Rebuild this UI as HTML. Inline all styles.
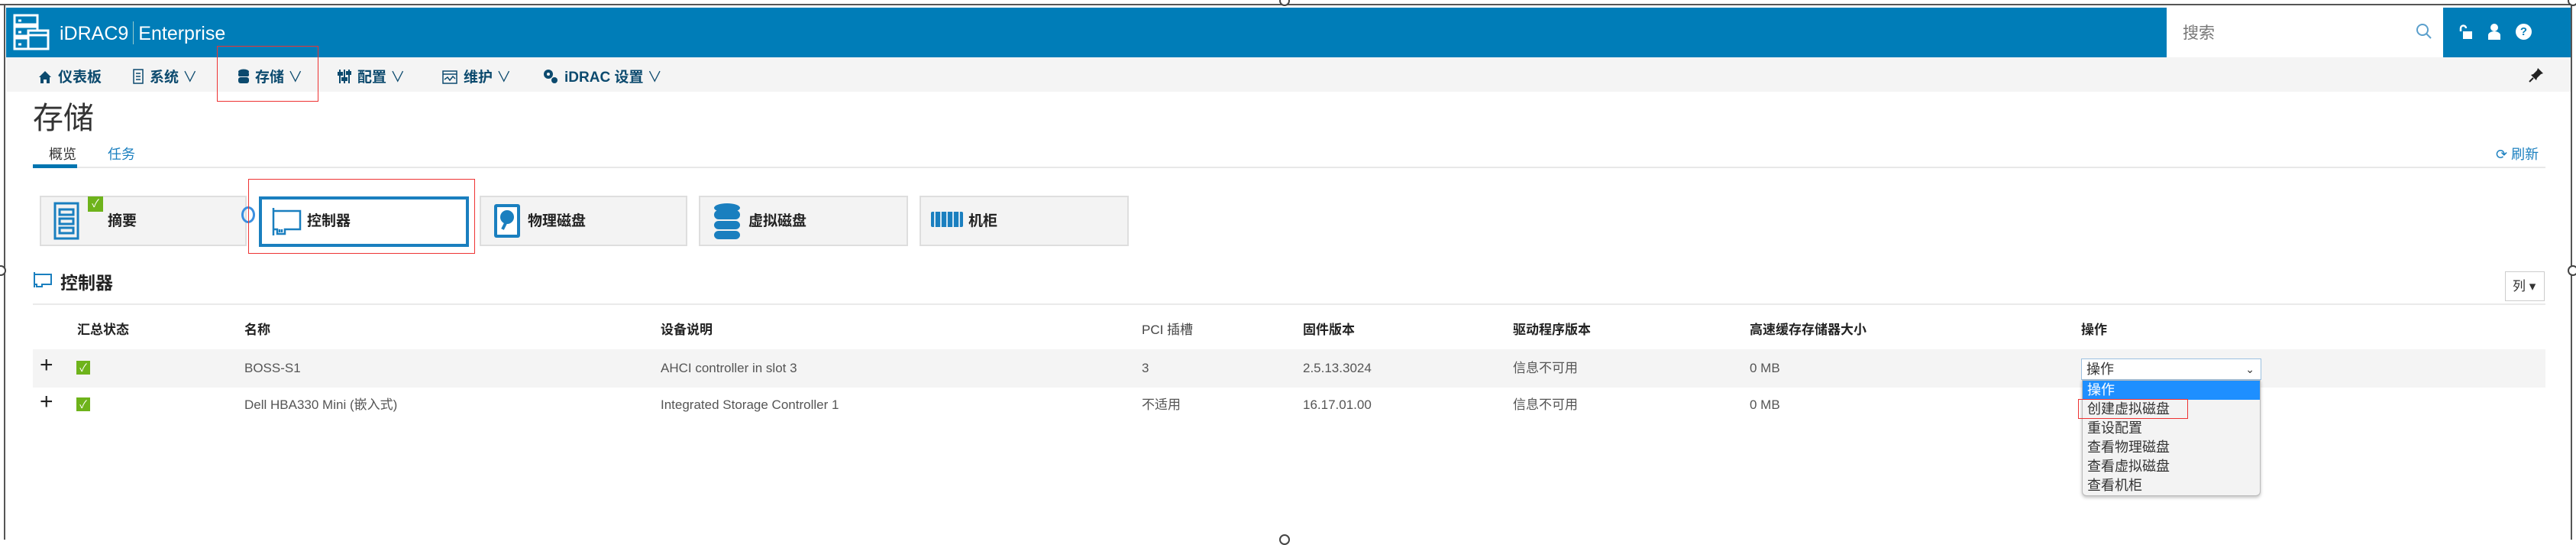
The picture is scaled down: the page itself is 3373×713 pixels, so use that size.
<!DOCTYPE html>
<html><head><meta charset="utf-8">
<style>
*{box-sizing:border-box;margin:0;padding:0}
body{width:3373px;height:706px;background:#fff;position:relative;overflow:hidden;font-family:"Liberation Sans","Noto Sans CJK SC",sans-serif;color:#333}
.a{position:absolute;white-space:nowrap}
.hdr{left:8px;top:10px;width:3358px;height:65px;background:#007db8}
.nav{left:8px;top:75px;width:3358px;height:45px;background:#f4f4f4}
.ni{font-size:19px;font-weight:bold;color:#0c4a6e;top:86px}
.ni svg{vertical-align:-3px;margin-right:8px}
.tile{top:256px;height:66px;background:#f3f3f3;border:2px solid #dedede;font-size:19px;font-weight:bold;color:#222}
.th{top:421px;font-size:17px;font-weight:bold;color:#222;line-height:22px}
.td{font-size:17px;color:#555;line-height:22px}
.chk{width:18px;height:18px;background:#6eb31b;color:#fff;font-size:14px;text-align:center;line-height:18px}
.plus{font-size:30px;color:#222;font-weight:300}
.dd div{height:25px;line-height:25px;padding-left:6px;font-size:18px;color:#333}
.h{width:14px;height:14px;border:2px solid #444;border-radius:50%;background:#fff}
</style></head><body>
<div class="a" style="left:0;top:5px;width:3373px;height:2px;background:#555"></div>
<div class="a" style="left:5px;top:5px;width:2px;height:701px;background:#555"></div>
<div class="a" style="left:3366px;top:5px;width:2px;height:701px;background:#555"></div>
<div class="a h" style="left:1675px;top:-6px"></div>
<div class="a h" style="left:3362px;top:-6px"></div>
<div class="a h" style="left:-6px;top:347px"></div>
<div class="a h" style="left:3362px;top:347px"></div>
<div class="a h" style="left:1675px;top:699px"></div>
<div class="a hdr"></div>
<svg class="a" style="left:17px;top:18px" width="50" height="50" viewBox="0 0 50 50" fill="none" stroke="#fff" stroke-width="3"><rect x="2" y="2" width="30" height="12"/><rect x="2" y="17" width="30" height="12"/><rect x="2" y="32" width="30" height="14"/><rect x="20" y="22" width="26" height="24" fill="#007db8"/><line x1="20" y1="28" x2="46" y2="28"/><line x1="7" y1="9" x2="11" y2="9"/><line x1="7" y1="24" x2="11" y2="24"/><line x1="7" y1="40" x2="11" y2="40"/></svg>
<div class="a" style="left:78px;top:28px;font-size:25px;color:#fff">iDRAC9<span style="display:inline-block;width:1px;height:30px;background:#9cc;margin:0 6px;vertical-align:-6px"></span>Enterprise</div>
<div class="a" style="left:2837px;top:10px;width:362px;height:65px;background:#fff"></div>
<div class="a" style="left:2858px;top:27px;font-size:21px;color:#777">搜索</div>
<svg class="a" style="left:3162px;top:29px" width="24" height="24" viewBox="0 0 24 24" fill="none" stroke="#5a9fcc" stroke-width="2"><circle cx="10" cy="10" r="7"/><line x1="15" y1="15" x2="21" y2="21"/></svg>
<svg class="a" style="left:3219px;top:32px" width="20" height="20" viewBox="0 0 20 20"><path d="M3 9 V5 a3.5 3.5 0 0 1 7 0" fill="none" stroke="#fff" stroke-width="2.5"/><rect x="6" y="9" width="12" height="10" fill="#fff"/></svg>
<svg class="a" style="left:3257px;top:31px" width="18" height="22" viewBox="0 0 18 22" fill="#fff"><circle cx="9" cy="5" r="5"/><path d="M1 21 V15 a8 5 0 0 1 16 0 V21z"/></svg>
<div class="a" style="left:3294px;top:31px;width:21px;height:21px;border-radius:50%;background:#fff;color:#007db8;font-size:15px;font-weight:bold;text-align:center;line-height:21px">?</div>
<div class="a nav"></div>
<div class="a ni" style="left:50px"><svg width="18" height="18" viewBox="0 0 18 18" fill="#0c4a6e"><path d="M9 1 L1 9 H3 V17 H7 V12 H11 V17 H15 V9 H17z"/></svg>仪表板</div>
<div class="a ni" style="left:174px"><svg width="14" height="20" viewBox="0 0 14 20" fill="none" stroke="#0c4a6e" stroke-width="1.5"><rect x="1" y="1" width="12" height="18"/><line x1="4" y1="6" x2="10" y2="6"/><line x1="4" y1="10" x2="10" y2="10"/><line x1="4" y1="14" x2="10" y2="14"/></svg>系统 <span style="font-weight:normal">∨</span></div>
<div class="a ni" style="left:312px"><svg width="14" height="20" viewBox="0 0 14 20" fill="#0c4a6e"><ellipse cx="7" cy="4" rx="7" ry="3.5"/><rect x="0" y="5" width="14" height="5" rx="2"/><rect x="0" y="11" width="14" height="8" rx="3"/></svg>存储 <span style="font-weight:normal">∨</span></div>
<div class="a ni" style="left:442px"><svg width="18" height="20" viewBox="0 0 18 20" stroke="#0c4a6e" stroke-width="2"><line x1="3" y1="1" x2="3" y2="19"/><line x1="9" y1="1" x2="9" y2="19"/><line x1="15" y1="1" x2="15" y2="19"/><rect x="0" y="5" width="6" height="3" fill="#0c4a6e"/><rect x="6" y="12" width="6" height="3" fill="#0c4a6e"/><rect x="12" y="4" width="6" height="3" fill="#0c4a6e"/></svg>配置 <span style="font-weight:normal">∨</span></div>
<div class="a ni" style="left:579px"><svg width="20" height="18" viewBox="0 0 20 18" fill="none" stroke="#0c4a6e" stroke-width="1.5"><rect x="1" y="1" width="18" height="16"/><line x1="1" y1="5" x2="19" y2="5"/><path d="M3 12 L7 9 L10 13 L14 8 L17 11"/></svg>维护 <span style="font-weight:normal">∨</span></div>
<div class="a ni" style="left:711px"><svg width="20" height="20" viewBox="0 0 20 20" fill="#0c4a6e"><circle cx="7" cy="7" r="6"/><circle cx="7" cy="7" r="2" fill="#f4f4f4"/><circle cx="15" cy="15" r="4"/></svg>iDRAC 设置 <span style="font-weight:normal">∨</span></div>
<svg class="a" style="left:3311px;top:88px" width="20" height="20" viewBox="0 0 20 20"><path d="M12 1 L19 8 L16 9 L11 14 L10 17 L3 10 L6 9 L11 4z" fill="#222"/><line x1="6" y1="14" x2="1" y2="19" stroke="#222" stroke-width="2"/></svg>
<div class="a" style="left:284px;top:60px;width:133px;height:73px;border:1.5px solid #e33"></div>
<div class="a" style="left:43px;top:122px;font-size:40px;color:#333">存储</div>
<div class="a" style="left:64px;top:188px;font-size:18px;color:#333">概览</div>
<div class="a" style="left:141px;top:188px;font-size:18px;color:#1a7fbf">任务</div>
<div class="a" style="left:43px;top:218px;width:3290px;height:2px;background:#e8e8e8"></div>
<div class="a" style="left:43px;top:215px;width:58px;height:5px;background:#0075b0"></div>
<div class="a" style="left:3268px;top:188px;font-size:18px;color:#1a7fbf">⟳ 刷新</div>
<div class="a tile" style="left:52px;width:271px"></div>
<svg class="a" style="left:70px;top:264px" width="34" height="50" viewBox="0 0 34 50" fill="none" stroke="#1a7fbf" stroke-width="3"><rect x="2" y="2" width="30" height="46"/><rect x="8" y="10" width="18" height="7"/><rect x="8" y="22" width="18" height="7"/><rect x="8" y="34" width="18" height="7"/></svg>
<div class="a chk" style="left:115px;top:257px;width:20px;height:20px">✓</div>
<div class="a" style="left:141px;top:274px;font-size:19px;font-weight:bold;color:#222">摘要</div>
<div class="a" style="left:316px;top:270px;width:18px;height:22px;border:3px solid #3a8fe0;border-radius:50%"></div>
<div class="a" style="left:339px;top:257px;width:275px;height:66px;background:#fff;border:4px solid #1a7fbf"></div>
<svg class="a" style="left:355px;top:270px" width="42" height="40" viewBox="0 0 42 40" fill="none" stroke="#1a7fbf" stroke-width="2.5"><path d="M3 2 V38 M3 6 H38 V30 H18 V36 H8 V30 H3"/><path d="M11 30 V34 M14 30 V34"/></svg>
<div class="a" style="left:402px;top:274px;font-size:19px;font-weight:bold;color:#222">控制器</div>
<div class="a" style="left:325px;top:234px;width:297px;height:98px;border:1.5px solid #e33"></div>
<div class="a tile" style="left:628px;width:272px"></div>
<svg class="a" style="left:646px;top:266px" width="36" height="46" viewBox="0 0 36 46"><rect x="1" y="1" width="34" height="44" rx="3" fill="#1a7fbf"/><rect x="5" y="5" width="26" height="36" fill="#fff"/><circle cx="18" cy="18" r="9" fill="#1a7fbf"/><path d="M12 34 L18 22" stroke="#1a7fbf" stroke-width="4"/></svg>
<div class="a" style="left:691px;top:274px;font-size:19px;font-weight:bold;color:#222">物理磁盘</div>
<div class="a tile" style="left:915px;width:274px"></div>
<svg class="a" style="left:934px;top:266px" width="36" height="48" viewBox="0 0 36 48" fill="#1a7fbf"><ellipse cx="18" cy="6" rx="17" ry="6"/><rect x="1" y="9" width="34" height="12" rx="6"/><rect x="1" y="23" width="34" height="11" rx="6"/><rect x="1" y="36" width="34" height="11" rx="6"/></svg>
<div class="a" style="left:980px;top:274px;font-size:19px;font-weight:bold;color:#222">虚拟磁盘</div>
<div class="a tile" style="left:1204px;width:274px"></div>
<div class="a" style="left:1219px;top:277px;width:42px;height:20px;background:#1a7fbf;border-radius:2px;background-image:repeating-linear-gradient(90deg,#1a7fbf 0 4px,#cfe4f2 4px 6px,#1a7fbf 6px 8px)"></div>
<div class="a" style="left:1268px;top:274px;font-size:19px;font-weight:bold;color:#222">机柜</div>
<svg class="a" style="left:43px;top:355px" width="26" height="22" viewBox="0 0 26 22" fill="none" stroke="#1a7fbf" stroke-width="2"><path d="M2 1 V21 M2 4 H24 V17 H12 V20 H5 V17 H2"/></svg>
<div class="a" style="left:79px;top:351px;font-size:23px;font-weight:bold;color:#222">控制器</div>
<div class="a" style="left:3280px;top:355px;width:52px;height:39px;border:1px solid #ccc;background:#fff;font-size:17px;line-height:37px;padding-left:9px;color:#333">列 ▾</div>
<div class="a" style="left:43px;top:397px;width:3290px;height:2px;background:#eaeaea"></div>
<div class="a th" style="left:101px">汇总状态</div>
<div class="a th" style="left:320px">名称</div>
<div class="a th" style="left:865px">设备说明</div>
<div class="a th" style="left:1495px;font-weight:normal;color:#444">PCI 插槽</div>
<div class="a th" style="left:1706px">固件版本</div>
<div class="a th" style="left:1981px">驱动程序版本</div>
<div class="a th" style="left:2291px">高速缓存存储器大小</div>
<div class="a th" style="left:2725px">操作</div>
<div class="a" style="left:43px;top:457px;width:3290px;height:50px;background:#f4f4f4"></div>
<div class="a plus" style="left:52px;top:461px">+</div>
<div class="a chk" style="left:100px;top:472px">✓</div>
<div class="a td" style="left:320px;top:471px">BOSS-S1</div>
<div class="a td" style="left:865px;top:471px">AHCI controller in slot 3</div>
<div class="a td" style="left:1495px;top:471px">3</div>
<div class="a td" style="left:1706px;top:471px">2.5.13.3024</div>
<div class="a td" style="left:1981px;top:471px">信息不可用</div>
<div class="a td" style="left:2291px;top:471px">0 MB</div>
<div class="a plus" style="left:52px;top:509px">+</div>
<div class="a chk" style="left:100px;top:520px">✓</div>
<div class="a td" style="left:320px;top:519px">Dell HBA330 Mini (嵌入式)</div>
<div class="a td" style="left:865px;top:519px">Integrated Storage Controller 1</div>
<div class="a td" style="left:1495px;top:519px">不适用</div>
<div class="a td" style="left:1706px;top:519px">16.17.01.00</div>
<div class="a td" style="left:1981px;top:519px">信息不可用</div>
<div class="a td" style="left:2291px;top:519px">0 MB</div>
<div class="a" style="left:2725px;top:469px;width:236px;height:28px;border:1px solid #9bc0e0;background:#fff;font-size:18px;line-height:26px;padding-left:6px;color:#333">操作<span style="position:absolute;right:8px;font-size:14px">⌄</span></div>
<div class="a dd" style="left:2726px;top:497px;width:234px;height:152px;background:#f3f3f3;border:1px solid #bbb;border-radius:0 0 6px 6px;box-shadow:0 2px 4px rgba(0,0,0,.25)">
<div style="background:#1e8fff;color:#fff">操作</div><div>创建虚拟磁盘</div><div>重设配置</div><div>查看物理磁盘</div><div>查看虚拟磁盘</div><div>查看机柜</div></div>
<div class="a" style="left:2721px;top:522px;width:144px;height:26px;border:1.5px solid #e33"></div>
</body></html>
